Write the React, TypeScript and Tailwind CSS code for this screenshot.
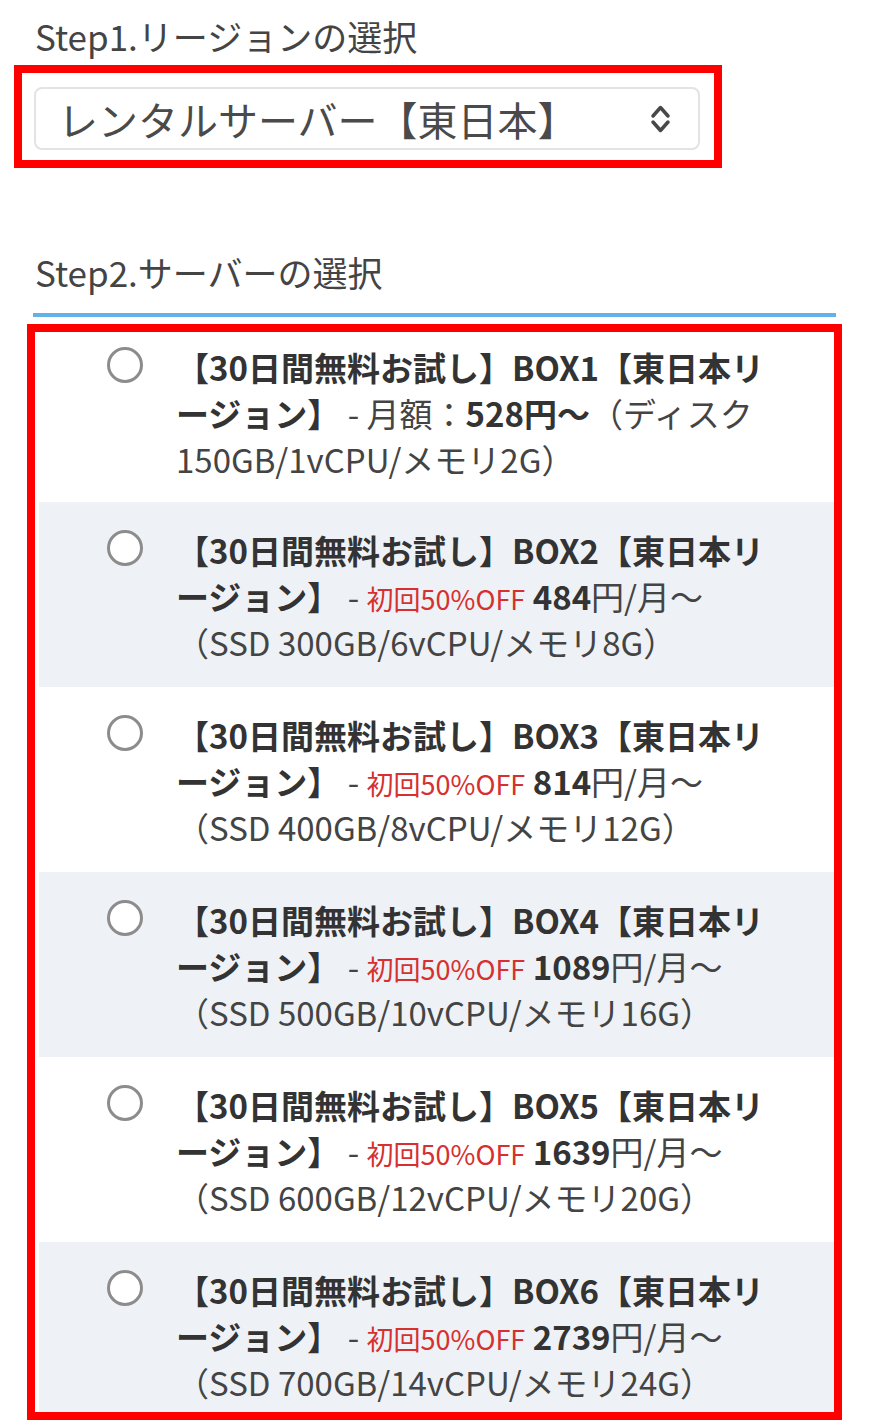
const plans = [
  { box: 1, price: "484", spec: "SSD 300GB/6vCPU/メモリ8G" },
  { box: 2, price: "484", spec: "SSD 300GB/6vCPU/メモリ8G" },
  { box: 3, price: "814", spec: "SSD 400GB/8vCPU/メモリ12G" },
  { box: 4, price: "1089", spec: "SSD 500GB/10vCPU/メモリ16G" },
  { box: 5, price: "1639", spec: "SSD 600GB/12vCPU/メモリ20G" },
  { box: 6, price: "2739", spec: "SSD 700GB/14vCPU/メモリ24G" },
];

function Radio() {
  return (
    <span className="mt-[3px] block h-[36px] w-[36px] shrink-0 rounded-full border-[3px] border-[#8c8c8c] bg-white" />
  );
}

function Chevrons() {
  return (
    <svg width="21" height="32" viewBox="0 0 21 32" fill="none" stroke="#484848" strokeWidth="3.5" strokeLinecap="round" strokeLinejoin="round">
      <path d="M3 13 L10.5 4.5 L18 13" />
      <path d="M3 19 L10.5 27.5 L18 19" />
    </svg>
  );
}

export default function App() {
  return (
    <div className="min-h-[1427px] w-[870px] bg-white font-['Noto_Sans_CJK_JP',sans-serif] text-[#444]">
      <div className="pl-[35px] pt-[12px]">
        <h2 className="text-[35px] leading-[48px] font-normal text-[#444]">Step1.リージョンの選択</h2>
      </div>

      {/* region select */}
      <div className="ml-[14px] mt-[5px] h-[103px] w-[708px] border-[8px] border-[#ff0000] pl-[12px] pt-[14px]">
        <div className="flex h-[63px] w-[666px] items-center justify-between rounded-lg border-2 border-[#e1e3e6] bg-white pl-[22px] pr-[27px]">
          <span className="text-[40px] leading-none text-[#4a4a4a]">レンタルサーバー【東日本】</span>
          <Chevrons />
        </div>
      </div>

      <div className="pl-[35px] pt-[80px]">
        <h2 className="text-[35px] leading-[48px] font-normal text-[#444]">Step2.サーバーの選択</h2>
      </div>
      <div className="ml-[33px] mt-[17px] h-[4px] w-[803px] bg-[#62b1ea]" />

      {/* plan list */}
      <div className="ml-[27px] mt-[7px] w-[815px] border-[8px] border-[#ff0000] pl-[4px]">
        {plans.map((p, i) => (
          <div
            key={p.box}
            className={`flex pl-[68px] ${i % 2 === 1 ? "bg-[#eef2f6]" : "bg-white"} ${
              i === 0 ? "pt-[12px] pb-[20px]" : i === 5 ? "pt-[25px] pb-[7px]" : "pt-[25px] pb-[22px]"
            }`}
          >
            <Radio />
            <p className="ml-[33px] w-[605px] text-[33px] leading-[46px] text-[#444]">
              <b className="font-bold text-[#333]">【30日間無料お試し】BOX{p.box}【東日本リージョン】</b>
              {i === 0 ? (
                <>
                  {" "}- 月額：<b className="font-bold text-[#333]">528円〜</b>（ディスク150GB/1vCPU/メモリ2G）
                </>
              ) : (
                <>
                  {" "}- <span className="text-[27px] leading-none text-[#d63030]">初回50%OFF</span>{" "}
                  <b className="font-bold text-[#333]">{p.price}</b>円/月〜（{p.spec}）
                </>
              )}
            </p>
          </div>
        ))}
      </div>
    </div>
  );
}
